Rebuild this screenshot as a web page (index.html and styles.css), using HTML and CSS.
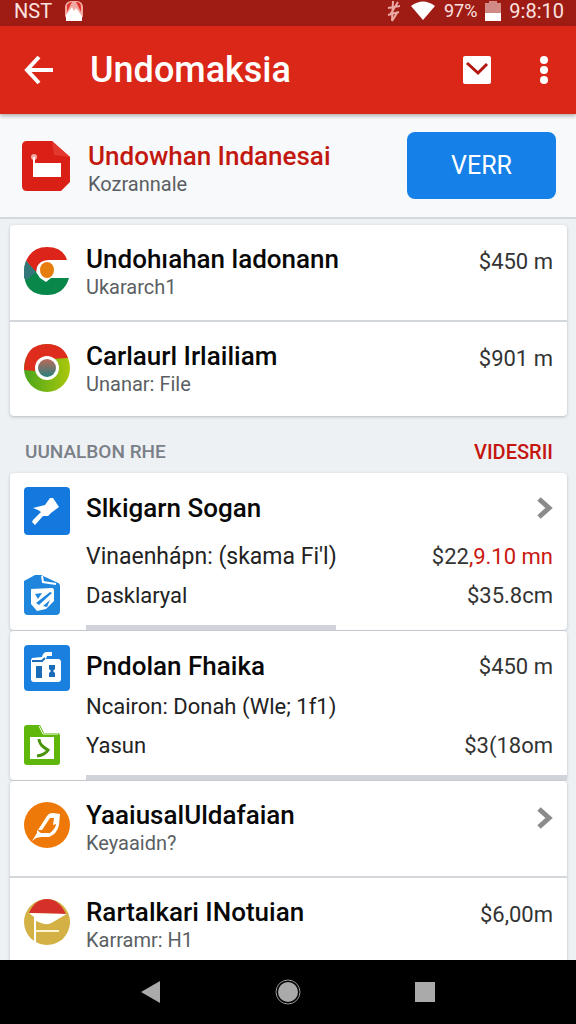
FILE: index.html
```html
<!DOCTYPE html>
<html lang="id">
<head>
    <meta charset="UTF-8">
    <meta name="viewport" content="width=device-width, initial-scale=1.0">
    <title>Undomaksia</title>
    <link rel="stylesheet" href="styles.css">
</head>
<body>
    <div class="statusbar">
        <span class="carrier">NST</span>
        <svg width="20" height="20" viewBox="0 0 20 20"><rect x="1" y="0" width="18" height="20" rx="6" fill="#f3a9a3"/><path d="M3 4q2-3 5-3L3 11zM12 1q5 0 5 5v5z" fill="#e0332b"/><path d="M2 20V14l6-8 2 4 2-3 6 8v5z" fill="#fff"/></svg>
        <div class="status-right">
            <svg width="16" height="22" viewBox="0 0 16 22" fill="none" stroke="#eba9a4" stroke-width="2"><path d="M7 1L6 21M12 2L4 15M2 8l12-2M2 15l11-3M6 21l5-8"/></svg>
            <svg width="26" height="20" viewBox="0 0 26 20"><path d="M1 5Q13-4 25 5L13 19z" fill="#fff"/></svg>
            <span class="battery-text">97%</span>
            <svg width="16" height="20" viewBox="0 0 16 20"><path d="M0 2h4V0h8v2h4v11H0z" fill="#d18a85"/><path d="M0 12h16v8H0z" fill="#fff"/></svg>
            <span class="clock">9:8:10</span>
        </div>
    </div>

    <header class="appbar">
        <button class="icon-btn" aria-label="Back">
            <svg width="30" height="30" viewBox="0 0 30 30" fill="none" stroke="#fff" stroke-width="4"><path d="M29 15H3M15 2L3 15l12 13"/></svg>
        </button>
        <h1>Undomaksia</h1>
        <button class="icon-btn" aria-label="Messages">
            <svg width="30" height="28" viewBox="0 0 30 28"><rect x="1" y="0" width="28" height="28" rx="2" fill="#fff"/><path d="M5 7l11 10L25 8" fill="none" stroke="#b3160f" stroke-width="3"/></svg>
        </button>
        <button class="icon-btn menu-btn" aria-label="More">
            <svg width="10" height="30" viewBox="0 0 10 30" fill="#fff"><circle cx="5" cy="5" r="4"/><circle cx="5" cy="15" r="4"/><circle cx="5" cy="25" r="4"/></svg>
        </button>
    </header>

    <section class="banner">
        <svg width="48" height="50" viewBox="0 0 48 50"><path d="M5 0h25l18 16v25l-9 9H5q-5 0-5-5V5q0-5 5-5z" fill="#d91f16"/><path d="M30 0l18 16-16-2z" fill="#e2382e"/><path d="M11 22h28v14H11z" fill="#fff"/><circle cx="12" cy="16" r="3" fill="#f7a8a0"/><path d="M11 16h2v8h-2z" fill="#fff"/></svg>
        <div class="banner-text">
            <h2>Undowhan Indanesai</h2>
            <p>Kozrannale</p>
        </div>
        <button class="verify">VERR</button>
    </section>

    <main>
        <div class="card">
            <div class="row">
                <svg class="icon" width="46" height="50" viewBox="0 0 46 50"><path d="M23 1q16 0 20 13H25q-9 0-12 7l-1 6L2 15Q8 1 23 1z" fill="#dc241b"/><path d="M2 15l10 11 4 6 6 4 5-4h18q-5 17-22 17Q0 49 0 26q0-6 2-11z" fill="#07874a"/><path d="M2 15l10 11-9 8-3-2q-1-9 2-17z" fill="#34777b"/><ellipse cx="23" cy="24" rx="7" ry="8" fill="#e67d0c"/></svg>
                <div class="names">
                    <h3>Undohıahan ladonann</h3>
                    <p>Ukararch1</p>
                </div>
                <span class="amount">$450 m</span>
            </div>
            <div class="row">
                <svg class="icon" width="46" height="50" viewBox="0 0 46 50">
                    <defs>
                        <linearGradient id="core" x1="0" y1="0" x2="0" y2="1"><stop offset="0" stop-color="#bd685a"/><stop offset="1" stop-color="#26817c"/></linearGradient>
                        <linearGradient id="ring" x1="0" y1="0" x2="1" y2="0"><stop offset="0" stop-color="#49a51d"/><stop offset="1" stop-color="#aac80c"/></linearGradient>
                    </defs>
                    <ellipse cx="23" cy="25" rx="23" ry="24" fill="url(#ring)"/><path d="M0 27Q1 1 23 1q16 0 21 14l-17 1-15 12z" fill="#df2d1d"/><circle cx="23" cy="25" r="12" fill="#fff"/><circle cx="23" cy="25" r="9" fill="url(#core)"/></svg>
                <div class="names">
                    <h3>Carlaurl Irlailiam</h3>
                    <p>Unanar: File</p>
                </div>
                <span class="amount">$901 m</span>
            </div>
        </div>

        <div class="section-head">
            <h4>UUNALBON RHE</h4>
            <a href="#">VIDESRII</a>
        </div>

        <div class="card group">
            <div class="group-icons">
                <svg width="46" height="48" viewBox="0 0 46 48"><rect width="46" height="48" rx="4" fill="#1479df"/><path d="M9 21l12-3 5-7 3 0 6 9-8 6-3 3-5 0-8 9-3-3 1-2 8-8-3-2z" fill="#fff"/></svg>
                <svg width="36" height="40" viewBox="0 0 36 40"><path d="M0 6l11-6h6l15 7q4 1 4 4v25q0 4-4 4H4q-4 0-4-4z" fill="#1e86dc"/><path d="M18 1l1 6 13 2" fill="none" stroke="#fff" stroke-width="2"/><path d="M7 14l21-1q2 0 2 3v10l-8 8-9 2-6-7z" fill="#fff"/><path d="M11 19l7-1-4 6zM26 17l2 1-13 12-3-2zM19 31l7-6-3 7z" fill="#1e86dc"/></svg>
            </div>
            <div class="group-body">
                <div class="line head spaced">
                    <h3>Slkigarn Sogan</h3>
                    <svg width="16" height="22" viewBox="0 0 16 22" fill="none" stroke="#8b8b8b" stroke-width="5"><path d="M2 2l10 9-10 9"/></svg>
                </div>
                <div class="line"><span>Vinaenhápn: (skama Fi'l)</span><span class="amount">$22<span class="red">,9.10 mn</span></span></div>
                <div class="line"><span class="small">Dasklaryal</span><span class="amount">$35.8cm</span></div>
                <div class="track short"></div>
            </div>
        </div>

        <div class="card group">
            <div class="group-icons tight">
                <svg width="46" height="46" viewBox="0 0 46 46"><rect width="46" height="46" rx="4" fill="#1980e0"/><path d="M7 15l1-2 10-1q1-5 5-5h5v4h-5l-1 3h12q3 0 3 3v17q0 3-3 3H10q-3 0-3-3z" fill="#fff"/><path d="M12 21h6v12h-6zM25 20h6v4l-2 2 2 2v4h-6v-4l2-2-2-2z" fill="#1b6cb8"/><path d="M8 16h10l3-3" fill="none" stroke="#1b6cb8" stroke-width="2"/></svg>
                <svg width="36" height="40" viewBox="0 0 36 40"><path d="M3 0h13l4 8h13q3 0 3 3v26q0 3-3 3H3q-3 0-3-3V3q0-3 3-3z" fill="#5eb70a"/><path d="M15 1l4 8h15" fill="none" stroke="#fff" stroke-width="1"/><path d="M6 12h24v22H6z" fill="#fff"/><path d="M15 14q0 6 9 11-3 5-11 6" fill="none" stroke="#48930c" stroke-width="3"/></svg>
            </div>
            <div class="group-body">
                <div class="line head"><h3>Pndolan Fhaika</h3><span class="amount">$450 m</span></div>
                <div class="line"><span class="small">Ncairon: Donah (Wle; 1f1)</span></div>
                <div class="line"><span class="small">Yasun</span><span class="amount">$3(18om</span></div>
                <div class="track"></div>
            </div>
        </div>

        <div class="card">
            <div class="row">
                <svg class="icon" width="46" height="46" viewBox="0 0 46 46"><circle cx="23" cy="23" r="23" fill="#ee7908"/><path d="M14 28L23 14q2-3 6-3l7 1-1 11q-2 9-10 12h-8l-5 1-4 3 5-8 0-3 4 3h9q6-5 6-9l-3 1 1-7h-4l-8 12z" fill="#fff"/></svg>
                <div class="names">
                    <h3>YaaiusalUldafaian</h3>
                    <p>Keyaaidn?</p>
                </div>
                <svg class="chevron" width="16" height="22" viewBox="0 0 16 22" fill="none" stroke="#8b8b8b" stroke-width="5"><path d="M2 2l10 9-10 9"/></svg>
            </div>
            <div class="row">
                <svg class="icon" width="46" height="46" viewBox="0 0 46 46"><circle cx="23" cy="23" r="23" fill="#d3b145"/><path d="M5 14Q11 0 23 0t19 15z" fill="#d6302a"/><path d="M5 14l5 4v26h2V22q10 5 16 2l15-9z" fill="#fff"/><path d="M12 23q5 4 12 3l19-11 3 9-8 17H12z" fill="#d3b145"/><path d="M12 32h23" stroke="#fff3cf" stroke-width="2"/></svg>
                <div class="names">
                    <h3>Rartalkari INotuian</h3>
                    <p>Karramr: H1</p>
                </div>
                <span class="amount">$6,00m</span>
            </div>
        </div>
    </main>

    <nav class="navbar">
        <button class="icon-btn" aria-label="Back"><svg width="26" height="26" viewBox="0 0 26 26"><path d="M22 2v22L3 13z" fill="#aaa"/></svg></button>
        <button class="icon-btn" aria-label="Home"><svg width="26" height="26" viewBox="0 0 26 26"><circle cx="13" cy="13" r="12" fill="none" stroke="#999" stroke-width="1"/><circle cx="13" cy="13" r="10" fill="#aaa"/></svg></button>
        <button class="icon-btn" aria-label="Recent apps"><svg width="26" height="26" viewBox="0 0 26 26"><rect x="3" y="3" width="20" height="20" fill="#aaa"/></svg></button>
    </nav>
</body>
</html>
```
FILE: styles.css
```css
* {
    box-sizing: border-box;
}

body {
    margin: 0;
    height: 100vh;
    display: flex;
    flex-direction: column;
    background-color: #edf1f4;
    font-family: Roboto, Arial, sans-serif;
    color: #222;
}

h1, h2, h3, h4, p {
    margin: 0;
    font-weight: 500;
    white-space: nowrap;
}

svg {
    display: block;
    flex-shrink: 0;
}

.icon-btn {
    background: none;
    border: none;
    padding: 0;
    cursor: pointer;
}

.statusbar {
    display: flex;
    align-items: center;
    flex-shrink: 0;
    gap: 12px;
    height: 26px;
    padding: 0 12px 4px 14px;
    background-color: #9f1c15;
    color: #fbe3e0;
    font-size: 20px;
    line-height: 22px;
}

.status-right {
    display: flex;
    align-items: center;
    gap: 8px;
    margin-left: auto;
}

.battery-text {
    font-size: 18px;
}

.appbar {
    display: flex;
    align-items: center;
    flex-shrink: 0;
    height: 88px;
    padding: 0 27px 0 24px;
    background-color: #da2718;
    color: #fff;
    box-shadow: 0 2px 4px rgba(0, 0, 0, 0.3);
    z-index: 1;
}

.appbar h1 {
    flex: 1;
    margin-left: 36px;
    font-size: 36px;
}

.menu-btn {
    margin-left: 47px;
}

.banner {
    display: flex;
    align-items: center;
    flex-shrink: 0;
    height: 105px;
    padding: 0 20px 0 22px;
    background-color: #f7f9fa;
    border-bottom: 2px solid #d3d8dd;
}

.banner-text {
    flex: 1;
    margin-left: 18px;
    padding-top: 4px;
}

.banner h2 {
    color: #c2180f;
    font-size: 26px;
    line-height: 32px;
}

p {
    color: #5b5f63;
    font-size: 20px;
    font-weight: 400;
    line-height: 24px;
}

.verify {
    width: 149px;
    height: 67px;
    border: none;
    border-radius: 8px;
    background-color: #1480e8;
    color: #fff;
    font-family: inherit;
    font-size: 25px;
    cursor: pointer;
}

main {
    flex: 1;
    min-height: 0;
    overflow: hidden;
    padding: 6px 9px 0 10px;
}

.card {
    background-color: #fff;
    border-radius: 4px;
    box-shadow: 0 1px 3px rgba(60, 70, 80, 0.3);
}

.row {
    display: flex;
    align-items: flex-start;
    gap: 16px;
    height: 95px;
    padding: 18px 14px 0;
}

.row + .row {
    height: 96px;
    border-top: 2px solid #d3d6da;
}

.row .icon {
    margin-top: 3px;
}

.names {
    flex: 1;
}

h3 {
    color: #080808;
    font-size: 26px;
    line-height: 32px;
}

.row .amount {
    line-height: 38px;
}

.row .chevron {
    margin-top: 8px;
}

.amount {
    font-size: 22px;
    color: #333;
    white-space: nowrap;
}

.section-head {
    display: flex;
    align-items: center;
    justify-content: space-between;
    height: 57px;
    padding: 14px 14px 0 15px;
    line-height: 24px;
}

.section-head h4 {
    color: #7a8087;
    font-size: 19px;
}

.section-head a {
    color: #c5150f;
    font-size: 20px;
    font-weight: 500;
    text-decoration: none;
}

.group {
    display: flex;
    gap: 16px;
    padding: 14px 0 0 14px;
    margin-bottom: 1px;
}

.group-icons {
    display: flex;
    flex-direction: column;
    gap: 40px;
    width: 46px;
}

.group-icons.tight {
    gap: 34px;
}

.group-body {
    flex: 1;
}

.line {
    display: flex;
    align-items: center;
    justify-content: space-between;
    height: 39px;
    padding-right: 14px;
    color: #222;
    font-size: 23px;
    white-space: nowrap;
}

.line.head {
    height: 42px;
}

.line.spaced {
    margin-bottom: 8px;
}

.line .small {
    font-size: 22px;
}

.red {
    color: #c91810;
}

.track {
    height: 5px;
    margin-top: 10px;
    background-color: #d0d4da;
}

.track.short {
    width: 52%;
}

.navbar {
    display: flex;
    align-items: center;
    justify-content: center;
    gap: 111px;
    flex-shrink: 0;
    height: 64px;
    background-color: #000;
}
```
